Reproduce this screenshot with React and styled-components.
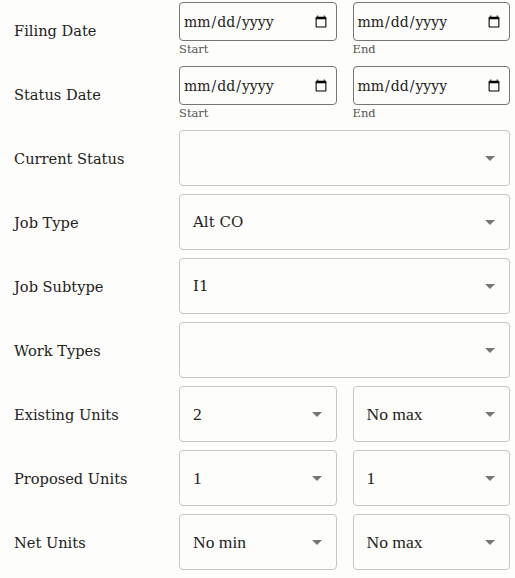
import React from "react";
import styled, { createGlobalStyle } from "styled-components";

const Global = createGlobalStyle`
  html, body { margin: 0; padding: 0; background: #fdfdfb; }
  body { font-family: "DejaVu Serif", serif; color: #222; }
`;

const Form = styled.div`
  display: grid;
  grid-template-columns: 165px 1fr;
  grid-auto-rows: 56px;
  row-gap: 8px;
  padding: 2px 5px 0 14px;
`;

const Label = styled.div`
  display: flex;
  align-items: center;
  padding-top: 1px;
  font-family: "DejaVu Serif", serif;
  font-size: 14.6px;
  color: #222;
`;

const Pair = styled.div`
  display: grid;
  grid-template-columns: 1fr 1fr;
  column-gap: 16px;
`;

const DateCell = styled.div`
  display: flex;
  flex-direction: column;
`;

const DateInput = styled.input`
  box-sizing: border-box;
  width: 100%;
  height: 39px;
  margin: 0;
  padding: 0 6px 0 3px;
  border: 1px solid #767676;
  border-radius: 4px;
  background: #fdfdfb;
  font-family: "DejaVu Serif", serif;
  font-size: 14px;
  color: #222;
`;

const Caption = styled.div`
  font-family: "DejaVu Serif", serif;
  font-size: 11.5px;
  color: #555;
  margin-top: 1px;
  line-height: 14px;
`;

const SelectBox = styled.div`
  box-sizing: border-box;
  height: 56px;
  display: flex;
  align-items: center;
  justify-content: space-between;
  padding: 0 13px 0 13px;
  border: 1px solid #c6c6c4;
  border-radius: 4px;
  background: #fdfdfb;
`;

const Value = styled.span`
  font-family: ${(p) => (p.$serif ? '"Liberation Serif", "Times New Roman", serif' : '"DejaVu Serif", serif')};
  font-size: ${(p) => (p.$serif ? "17.5px" : "15px")};
  color: #222;
`;

const Arrow = styled.span`
  width: 0;
  height: 0;
  border-left: 5px solid transparent;
  border-right: 5px solid transparent;
  border-top: 5px solid #757575;
  margin-right: 1px;
`;

const Select = ({ value, serif }) => (
  <SelectBox>
    <Value $serif={serif}>{value || ""}</Value>
    <Arrow />
  </SelectBox>
);

const DateRange = () => (
  <Pair>
    <DateCell>
      <DateInput type="date" />
      <Caption>Start</Caption>
    </DateCell>
    <DateCell>
      <DateInput type="date" />
      <Caption>End</Caption>
    </DateCell>
  </Pair>
);

export default function App() {
  return (
    <>
      <Global />
      <Form>
        <Label>Filing Date</Label>
        <DateRange />
        <Label>Status Date</Label>
        <DateRange />
        <Label>Current Status</Label>
        <Select />
        <Label>Job Type</Label>
        <Select value="Alt CO" />
        <Label>Job Subtype</Label>
        <Select value="I1" />
        <Label>Work Types</Label>
        <Select />
        <Label>Existing Units</Label>
        <Pair>
          <Select value="2" serif />
          <Select value="No max" serif />
        </Pair>
        <Label>Proposed Units</Label>
        <Pair>
          <Select value="1" serif />
          <Select value="1" serif />
        </Pair>
        <Label>Net Units</Label>
        <Pair>
          <Select value="No min" serif />
          <Select value="No max" serif />
        </Pair>
      </Form>
    </>
  );
}
